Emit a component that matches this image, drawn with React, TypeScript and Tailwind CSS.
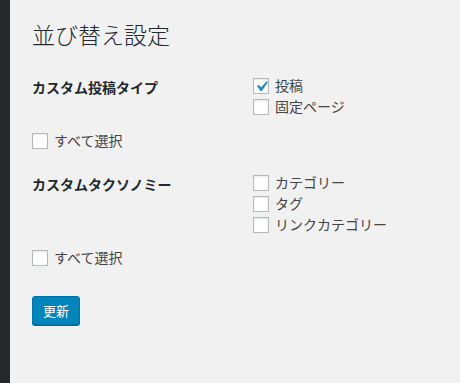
const font = { fontFamily: '"Noto Sans CJK JP", "Noto Sans", sans-serif' };

const Box = ({ checked }: { checked?: boolean }) => (
  <span className="relative flex h-[16px] w-[16px] shrink-0 items-center justify-center border border-[#b4b9be] bg-white shadow-[inset_0_1px_2px_rgba(0,0,0,0.1)]">
    {checked && (
      <svg viewBox="0 0 20 20" className="absolute left-[-3px] top-[-3px] h-[21px] w-[21px]">
        <path d="M14.83 4.89l1.34.94-5.81 8.38H9.02L5.78 9.67l1.34-1.25 2.57 2.4z" fill="#1e8cbe" />
      </svg>
    )}
  </span>
);

const Item = ({ label, checked }: { label: string; checked?: boolean }) => (
  <div className="flex h-[21px] items-center gap-[6px] text-[14px] text-[#444]">
    <Box checked={checked} />
    <span className="leading-[21px]">{label}</span>
  </div>
);

const Section = ({ title, items }: { title: string; items: { label: string; checked?: boolean }[] }) => (
  <div className="flex">
    <div className="w-[221px] pt-[2px] text-[14px] font-bold leading-[21px] text-[#23282d]">{title}</div>
    <div className="flex flex-col">
      {items.map((it) => (
        <Item key={it.label} label={it.label} checked={it.checked} />
      ))}
    </div>
  </div>
);

export default function App() {
  return (
    <div className="flex h-[383px] w-[460px] overflow-hidden bg-[#f1f1f1]" style={font}>
      <div className="w-[10px] shrink-0 bg-[#23282d]" />
      <div className="flex flex-col pl-[22px] pt-[20px]">
        <h1 className="h-[29px] text-[23px] font-light leading-[29px] text-[#23282d]">並び替え設定</h1>
        <div className="mt-[26px]">
          <Section title="カスタム投稿タイプ" items={[{ label: "投稿", checked: true }, { label: "固定ページ" }]} />
        </div>
        <div className="mt-[13px]">
          <Item label="すべて選択" />
        </div>
        <div className="mt-[21px]">
          <Section
            title="カスタムタクソノミー"
            items={[{ label: "カテゴリー" }, { label: "タグ" }, { label: "リンクカテゴリー" }]}
          />
        </div>
        <div className="mt-[12px]">
          <Item label="すべて選択" />
        </div>
        <div className="mt-[28px]">
          <button className="h-[29px] w-[48px] rounded-[3px] border border-[#0073aa] bg-[#0085ba] text-[13px] leading-[27px] text-white shadow-[0_1px_0_#006799]">
            更新
          </button>
        </div>
      </div>
    </div>
  );
}
